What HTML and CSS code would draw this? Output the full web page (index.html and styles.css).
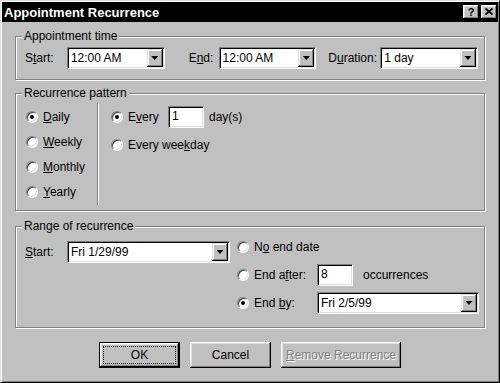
FILE: index.html
```html
<!DOCTYPE html>
<html lang="en">

<head>
  <meta charset="UTF-8">
  <title>Appointment Recurrence</title>
  <link rel="stylesheet" href="styles.css">
</head>

<body>
  <div class="window">
    <div class="titlebar">
      <span class="title">Appointment Recurrence</span>
      <div class="title-buttons">
        <span class="tbtn help">?</span>
        <span class="tbtn">
          <svg width="8" height="7" viewBox="0 0 8 7">
            <path d="M0.5 0.5L7.5 6.5M7.5 0.5L0.5 6.5" stroke="#000" stroke-width="1.7" fill="none" />
          </svg>
        </span>
      </div>
    </div>

    <div class="content">
      <!-- Appointment time -->
      <div class="group group-time">
        <span class="group-title">Appointment time</span>
        <div class="row">
          <span class="lbl lbl-start">S<u>t</u>art:</span>
          <div class="combo combo-time">
            <span class="combo-text">12:00 AM</span>
            <span class="drop"></span>
          </div>
          <span class="lbl lbl-end">E<u>n</u>d:</span>
          <div class="combo combo-time">
            <span class="combo-text">12:00 AM</span>
            <span class="drop"></span>
          </div>
          <span class="lbl lbl-duration">D<u>u</u>ration:</span>
          <div class="combo combo-time">
            <span class="combo-text">1 day</span>
            <span class="drop"></span>
          </div>
        </div>
      </div>

      <!-- Recurrence pattern -->
      <div class="group group-pattern">
        <span class="group-title">Recurrence pattern</span>
        <div class="freq">
          <div class="radio-row"><span class="radio checked"></span><span><u>D</u>aily</span></div>
          <div class="radio-row"><span class="radio"></span><span><u>W</u>eekly</span></div>
          <div class="radio-row"><span class="radio"></span><span><u>M</u>onthly</span></div>
          <div class="radio-row"><span class="radio"></span><span><u>Y</u>early</span></div>
        </div>
        <div class="daily-opts">
          <div class="radio-row">
            <span class="radio checked"></span>
            <span class="every-label">E<u>v</u>ery</span>
            <span class="field">1</span>
            <span class="after-field">day(s)</span>
          </div>
          <div class="radio-row weekday-row"><span class="radio"></span><span>Every wee<u>k</u>day</span></div>
        </div>
      </div>

      <!-- Range of recurrence -->
      <div class="group group-range">
        <span class="group-title">Range of recurrence</span>
        <div class="range-start">
          <span class="lbl lbl-start"><u>S</u>tart:</span>
          <div class="combo combo-date">
            <span class="combo-text">Fri 1/29/99</span>
            <span class="drop"></span>
          </div>
        </div>
        <div class="range-end">
          <div class="end-row"><span class="radio"></span><span>N<u>o</u> end date</span></div>
          <div class="end-row">
            <span class="radio"></span>
            <span class="end-label">End a<u>f</u>ter:</span>
            <span class="field">8</span>
            <span class="after-field">occurrences</span>
          </div>
          <div class="end-row">
            <span class="radio checked"></span>
            <span class="end-label">End <u>b</u>y:</span>
            <div class="combo combo-date">
              <span class="combo-text">Fri 2/5/99</span>
              <span class="drop"></span>
            </div>
          </div>
        </div>
      </div>

      <div class="buttons">
        <span class="btn btn-default">OK</span>
        <span class="btn">Cancel</span>
        <span class="btn btn-disabled"><span><u>R</u>emove Recurrence</span></span>
      </div>
    </div>
  </div>
</body>

</html>
```

FILE: styles.css
```css
* {
  box-sizing: border-box;
}

body {
  margin: 0;
  background: #c0c0c0;
  font-family: "Liberation Sans", Arial, sans-serif;
  font-size: 12px;
  color: #000;
}

u {
  text-decoration: underline;
  text-underline-offset: 1px;
}

.window {
  width: 500px;
  height: 383px;
  background: #c0c0c0;
  border: 1px solid;
  border-color: #dfdfdf #000 #000 #dfdfdf;
  box-shadow: inset 1px 1px #fff, inset -1px -1px #808080;
  padding: 1px;
}

.titlebar {
  height: 20px;
  background: #000;
  color: #fff;
  display: flex;
  align-items: center;
  justify-content: space-between;
  padding: 0 1px 0 2px;
}

.title {
  font-weight: bold;
  font-size: 13px;
}

.title-buttons {
  display: flex;
  gap: 2px;
}

.tbtn {
  width: 16px;
  height: 14px;
  background: #c0c0c0;
  color: #000;
  box-shadow: inset -1px -1px #000, inset 1px 1px #fff, inset -2px -2px #808080, inset 2px 2px #dfdfdf;
  display: flex;
  align-items: center;
  justify-content: center;
  font-weight: bold;
  font-size: 11px;
  padding-bottom: 1px;
}

.content {
  padding: 14px 13px 0;
}

/* etched group box */
.group {
  position: relative;
  border: 1px solid #808080;
  box-shadow: inset 1px 1px #fff, 1px 1px #fff;
}

.group-title {
  position: absolute;
  top: -8px;
  left: 6px;
  padding: 0 2px;
  line-height: 14px;
  background: #c0c0c0;
}

.row {
  display: flex;
  align-items: center;
}

.group-time {
  height: 44px;
  padding: 10px 6px 10px 9px;
}

.lbl-start {
  width: 42px;
}

.lbl-end {
  width: 30px;
  margin-left: 24px;
}

.lbl-duration {
  width: 52px;
  margin-left: 12px;
}

/* sunken fields */
.combo,
.field {
  height: 22px;
  background: #fff;
  border: 1px solid;
  border-color: #808080 #fff #fff #808080;
  box-shadow: inset 1px 1px #000, inset -1px -1px #dfdfdf;
}

.combo {
  display: flex;
  padding: 1px;
}

.combo-time {
  width: 98px;
}

.combo-date {
  width: 162px;
}

.combo-text {
  flex: 1;
  padding-left: 2px;
  line-height: 18px;
}

.drop {
  width: 16px;
  height: 18px;
  background: #c0c0c0;
  box-shadow: inset -1px -1px #000, inset 1px 1px #dfdfdf, inset -2px -2px #808080, inset 2px 2px #fff;
  display: flex;
  align-items: center;
  justify-content: center;
}

.drop::after {
  content: "";
  width: 7px;
  height: 4px;
  background: #000;
  clip-path: polygon(0 0, 100% 0, 50% 100%);
}

.field {
  width: 36px;
  padding-left: 3px;
  line-height: 18px;
}

.after-field {
  margin-left: 10px;
}

/* radio buttons */
.radio {
  position: relative;
  width: 12px;
  height: 12px;
  flex-shrink: 0;
  border-radius: 50%;
  background: #fff;
  border: 1px solid;
  border-color: #808080 #fff #fff #808080;
  box-shadow: inset 1px 1px #404040, inset -1px -1px #dfdfdf;
  margin-right: 5px;
}

.radio.checked::after {
  content: "";
  position: absolute;
  left: 3px;
  top: 3px;
  width: 4px;
  height: 4px;
  border-radius: 50%;
  background: #000;
}

.radio-row {
  display: flex;
  align-items: center;
  height: 25px;
}

.group-pattern {
  height: 118px;
  margin-top: 13px;
  padding: 10px 0 6px;
  display: flex;
}

.freq {
  width: 81px;
  padding-left: 10px;
}

.daily-opts {
  border-left: 1px solid #808080;
  box-shadow: inset 1px 0 #fff;
  padding-left: 13px;
  margin-top: -1px;
  margin-bottom: -1px;
  padding-top: 1px;
}

.every-label {
  width: 40px;
}

.daily-opts .after-field {
  margin-left: 5px;
}

.weekday-row {
  margin-top: 3px;
}

.group-range {
  height: 102px;
  margin-top: 15px;
  padding: 9px 0 13px 9px;
  display: flex;
}

.range-start {
  display: flex;
  align-items: center;
  align-self: flex-start;
  margin-top: 5px;
}

.range-start .combo-date {
  width: 163px;
}

.range-end {
  margin-left: 7px;
  display: flex;
  flex-direction: column;
  gap: 6px;
}

.end-row {
  height: 22px;
  display: flex;
  align-items: center;
}

.end-label {
  width: 63px;
}

/* push buttons */
.buttons {
  margin-top: 14px;
  display: flex;
  justify-content: center;
  gap: 10px;
}

.btn {
  position: relative;
  width: 81px;
  height: 26px;
  background: #c0c0c0;
  box-shadow: inset -1px -1px #000, inset 1px 1px #fff, inset -2px -2px #808080, inset 2px 2px #dfdfdf;
  display: flex;
  align-items: center;
  justify-content: center;
}

.btn-default {
  border: 1px solid #000;
}

.btn-default::after {
  content: "";
  position: absolute;
  inset: 3px;
  border: 1px dotted #000;
}

.btn-disabled {
  width: 120px;
  color: #808080;
  text-shadow: 1px 1px #fff;
}
```
